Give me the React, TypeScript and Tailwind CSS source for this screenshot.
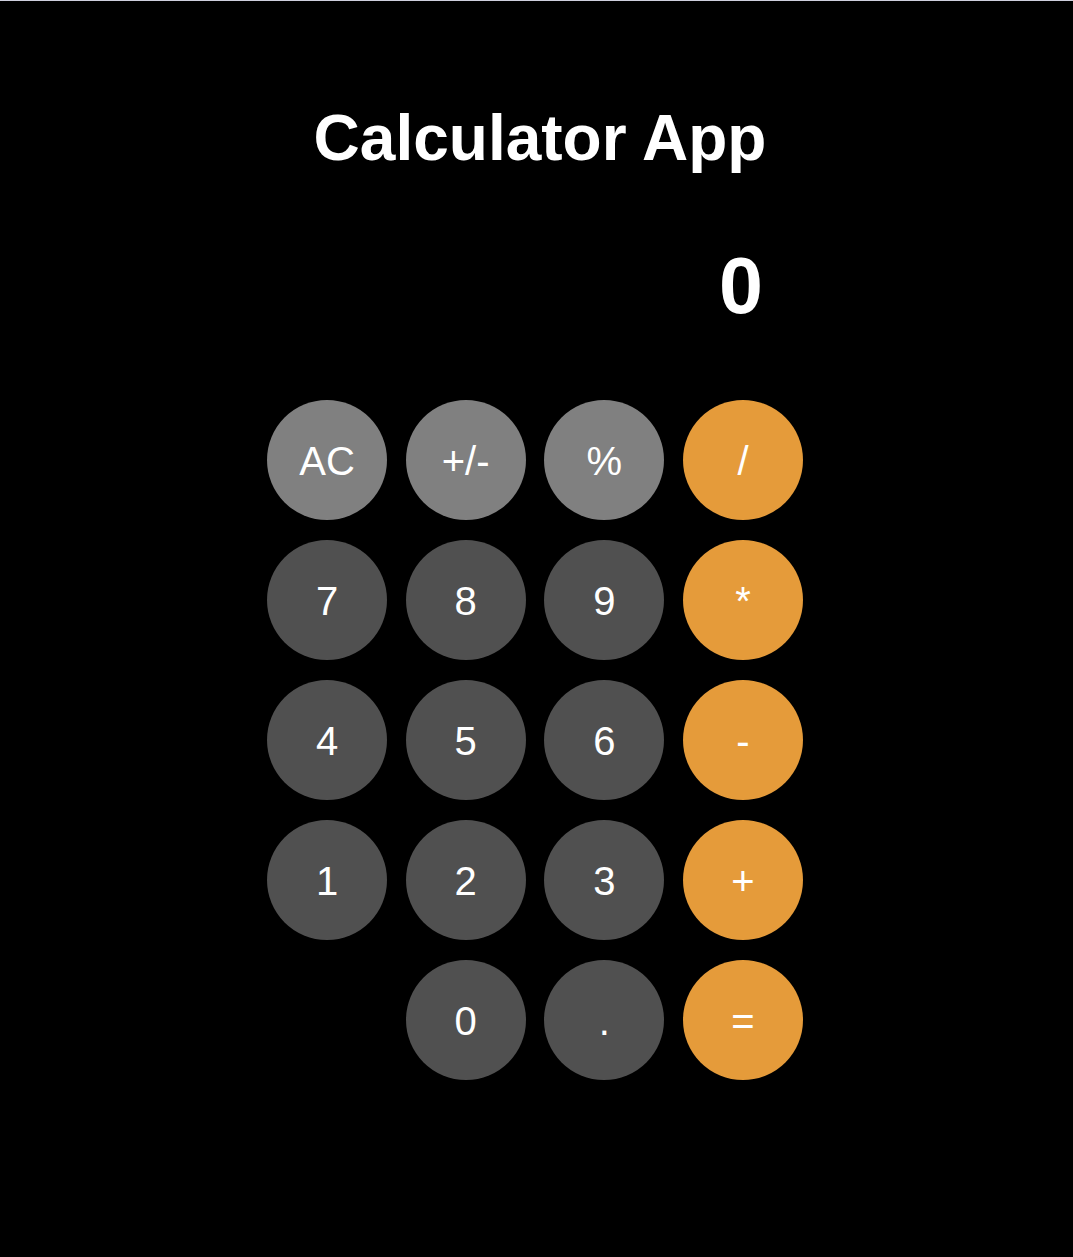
const rows: { label: string; tone: "light" | "dark" | "accent" | "blank" }[][] = [
  [
    { label: "AC", tone: "light" },
    { label: "+/-", tone: "light" },
    { label: "%", tone: "light" },
    { label: "/", tone: "accent" },
  ],
  [
    { label: "7", tone: "dark" },
    { label: "8", tone: "dark" },
    { label: "9", tone: "dark" },
    { label: "*", tone: "accent" },
  ],
  [
    { label: "4", tone: "dark" },
    { label: "5", tone: "dark" },
    { label: "6", tone: "dark" },
    { label: "-", tone: "accent" },
  ],
  [
    { label: "1", tone: "dark" },
    { label: "2", tone: "dark" },
    { label: "3", tone: "dark" },
    { label: "+", tone: "accent" },
  ],
  [
    { label: "", tone: "blank" },
    { label: "0", tone: "dark" },
    { label: ".", tone: "dark" },
    { label: "=", tone: "accent" },
  ],
];

const toneClass = {
  light: "bg-[#808080]",
  dark: "bg-[#505050]",
  accent: "bg-[#e59b3a]",
  blank: "",
};

export default function App() {
  return (
    <div
      className="min-h-screen border-t border-[#cfd0de] bg-black pt-[101px] text-white"
      style={{ fontFamily: '"Liberation Sans", Arial, sans-serif' }}
    >
      <h1 className="pl-[7px] text-center text-[64px] font-bold leading-[72px]">
        Calculator App
      </h1>

      <div className="flex justify-center pr-[3px]">
        <div className="w-[536px]">
          <div className="mt-[72px] pr-[40px] text-right text-[79px] font-bold leading-[80px]">
            0
          </div>

          <div className="mt-[74px] grid grid-cols-4 gap-x-[18.67px] gap-y-5">
            {rows.flat().map((key, i) =>
              key.tone === "blank" ? (
                <div key={i} className="h-[120px] w-[120px]" />
              ) : (
                <button
                  key={i}
                  className={`flex h-[120px] w-[120px] items-center justify-center rounded-full pt-[2px] text-[40px] text-white ${toneClass[key.tone]}`}
                >
                  {key.label}
                </button>
              ),
            )}
          </div>
        </div>
      </div>
    </div>
  );
}
